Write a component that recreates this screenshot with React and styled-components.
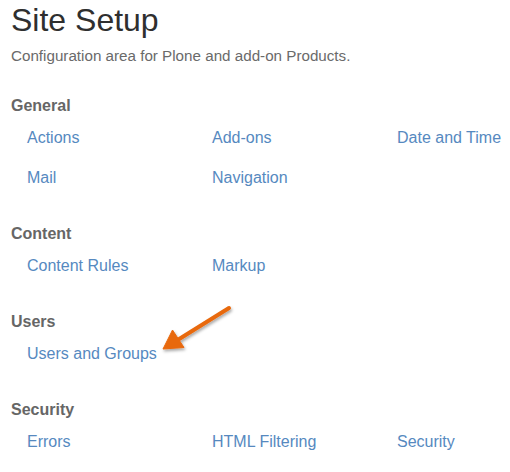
import React from "react";
import styled, { createGlobalStyle } from "styled-components";

const GlobalStyle = createGlobalStyle`
  body {
    margin: 0;
    background: #fff;
    font-family: "Liberation Sans", Arial, sans-serif;
  }
`;

const Page = styled.div`
  position: relative;
  padding: 0 0 0 11px;
`;

const Title = styled.h1`
  margin: 0;
  font-size: 32px;
  line-height: 40px;
  font-weight: 400;
  color: #2f2f2f;
`;

const Description = styled.p`
  margin: 6px 0 30px;
  font-size: 15.2px;
  line-height: 20px;
  color: #6a6a6a;
`;

const Sections = styled.div`
  display: flex;
  flex-direction: column;
  gap: 36px;
`;

const Section = styled.section``;

const SectionTitle = styled.h2`
  margin: 0 0 12px;
  font-size: 16px;
  line-height: 20px;
  font-weight: 700;
  color: #666;
`;

const LinkGrid = styled.ul`
  list-style: none;
  margin: 0;
  padding: 0 0 0 16px;
  display: grid;
  grid-template-columns: 185px 185px minmax(0, 1fr);
  row-gap: 20px;
`;

const Item = styled.li`
  font-size: 16px;
  line-height: 20px;
  white-space: nowrap;
`;

const Link = styled.a`
  color: #5689bf;
  text-decoration: none;
`;

const Arrow = styled.svg`
  position: absolute;
  left: 150px;
  top: 296px;
  overflow: visible;
`;

const sections = [
  { title: "General", links: ["Actions", "Add-ons", "Date and Time", "Mail", "Navigation"] },
  { title: "Content", links: ["Content Rules", "Markup"] },
  { title: "Users", links: ["Users and Groups"] },
  { title: "Security", links: ["Errors", "HTML Filtering", "Security"] },
];

export default function App() {
  return (
    <Page>
      <GlobalStyle />
      <Title>Site Setup</Title>
      <Description>Configuration area for Plone and add-on Products.</Description>
      <Sections>
        {sections.map((s) => (
          <Section key={s.title}>
            <SectionTitle>{s.title}</SectionTitle>
            <LinkGrid>
              {s.links.map((l) => (
                <Item key={l}>
                  <Link href="#">{l}</Link>
                </Item>
              ))}
            </LinkGrid>
          </Section>
        ))}
      </Sections>
      <Arrow width="95" height="65" viewBox="0 0 95 65">
        <defs>
          <filter id="shadow" x="-30%" y="-30%" width="160%" height="160%">
            <feDropShadow dx="1" dy="2" stdDeviation="1.5" floodColor="#000" floodOpacity="0.35" />
          </filter>
        </defs>
        <g filter="url(#shadow)" fill="#e8690d" stroke="#e8690d">
          <line x1="79" y1="12" x2="26" y2="45" strokeWidth="4" strokeLinecap="round" />
          <polygon points="13,53 34,51.5 22.5,34" strokeWidth="1" strokeLinejoin="round" />
        </g>
      </Arrow>
    </Page>
  );
}
